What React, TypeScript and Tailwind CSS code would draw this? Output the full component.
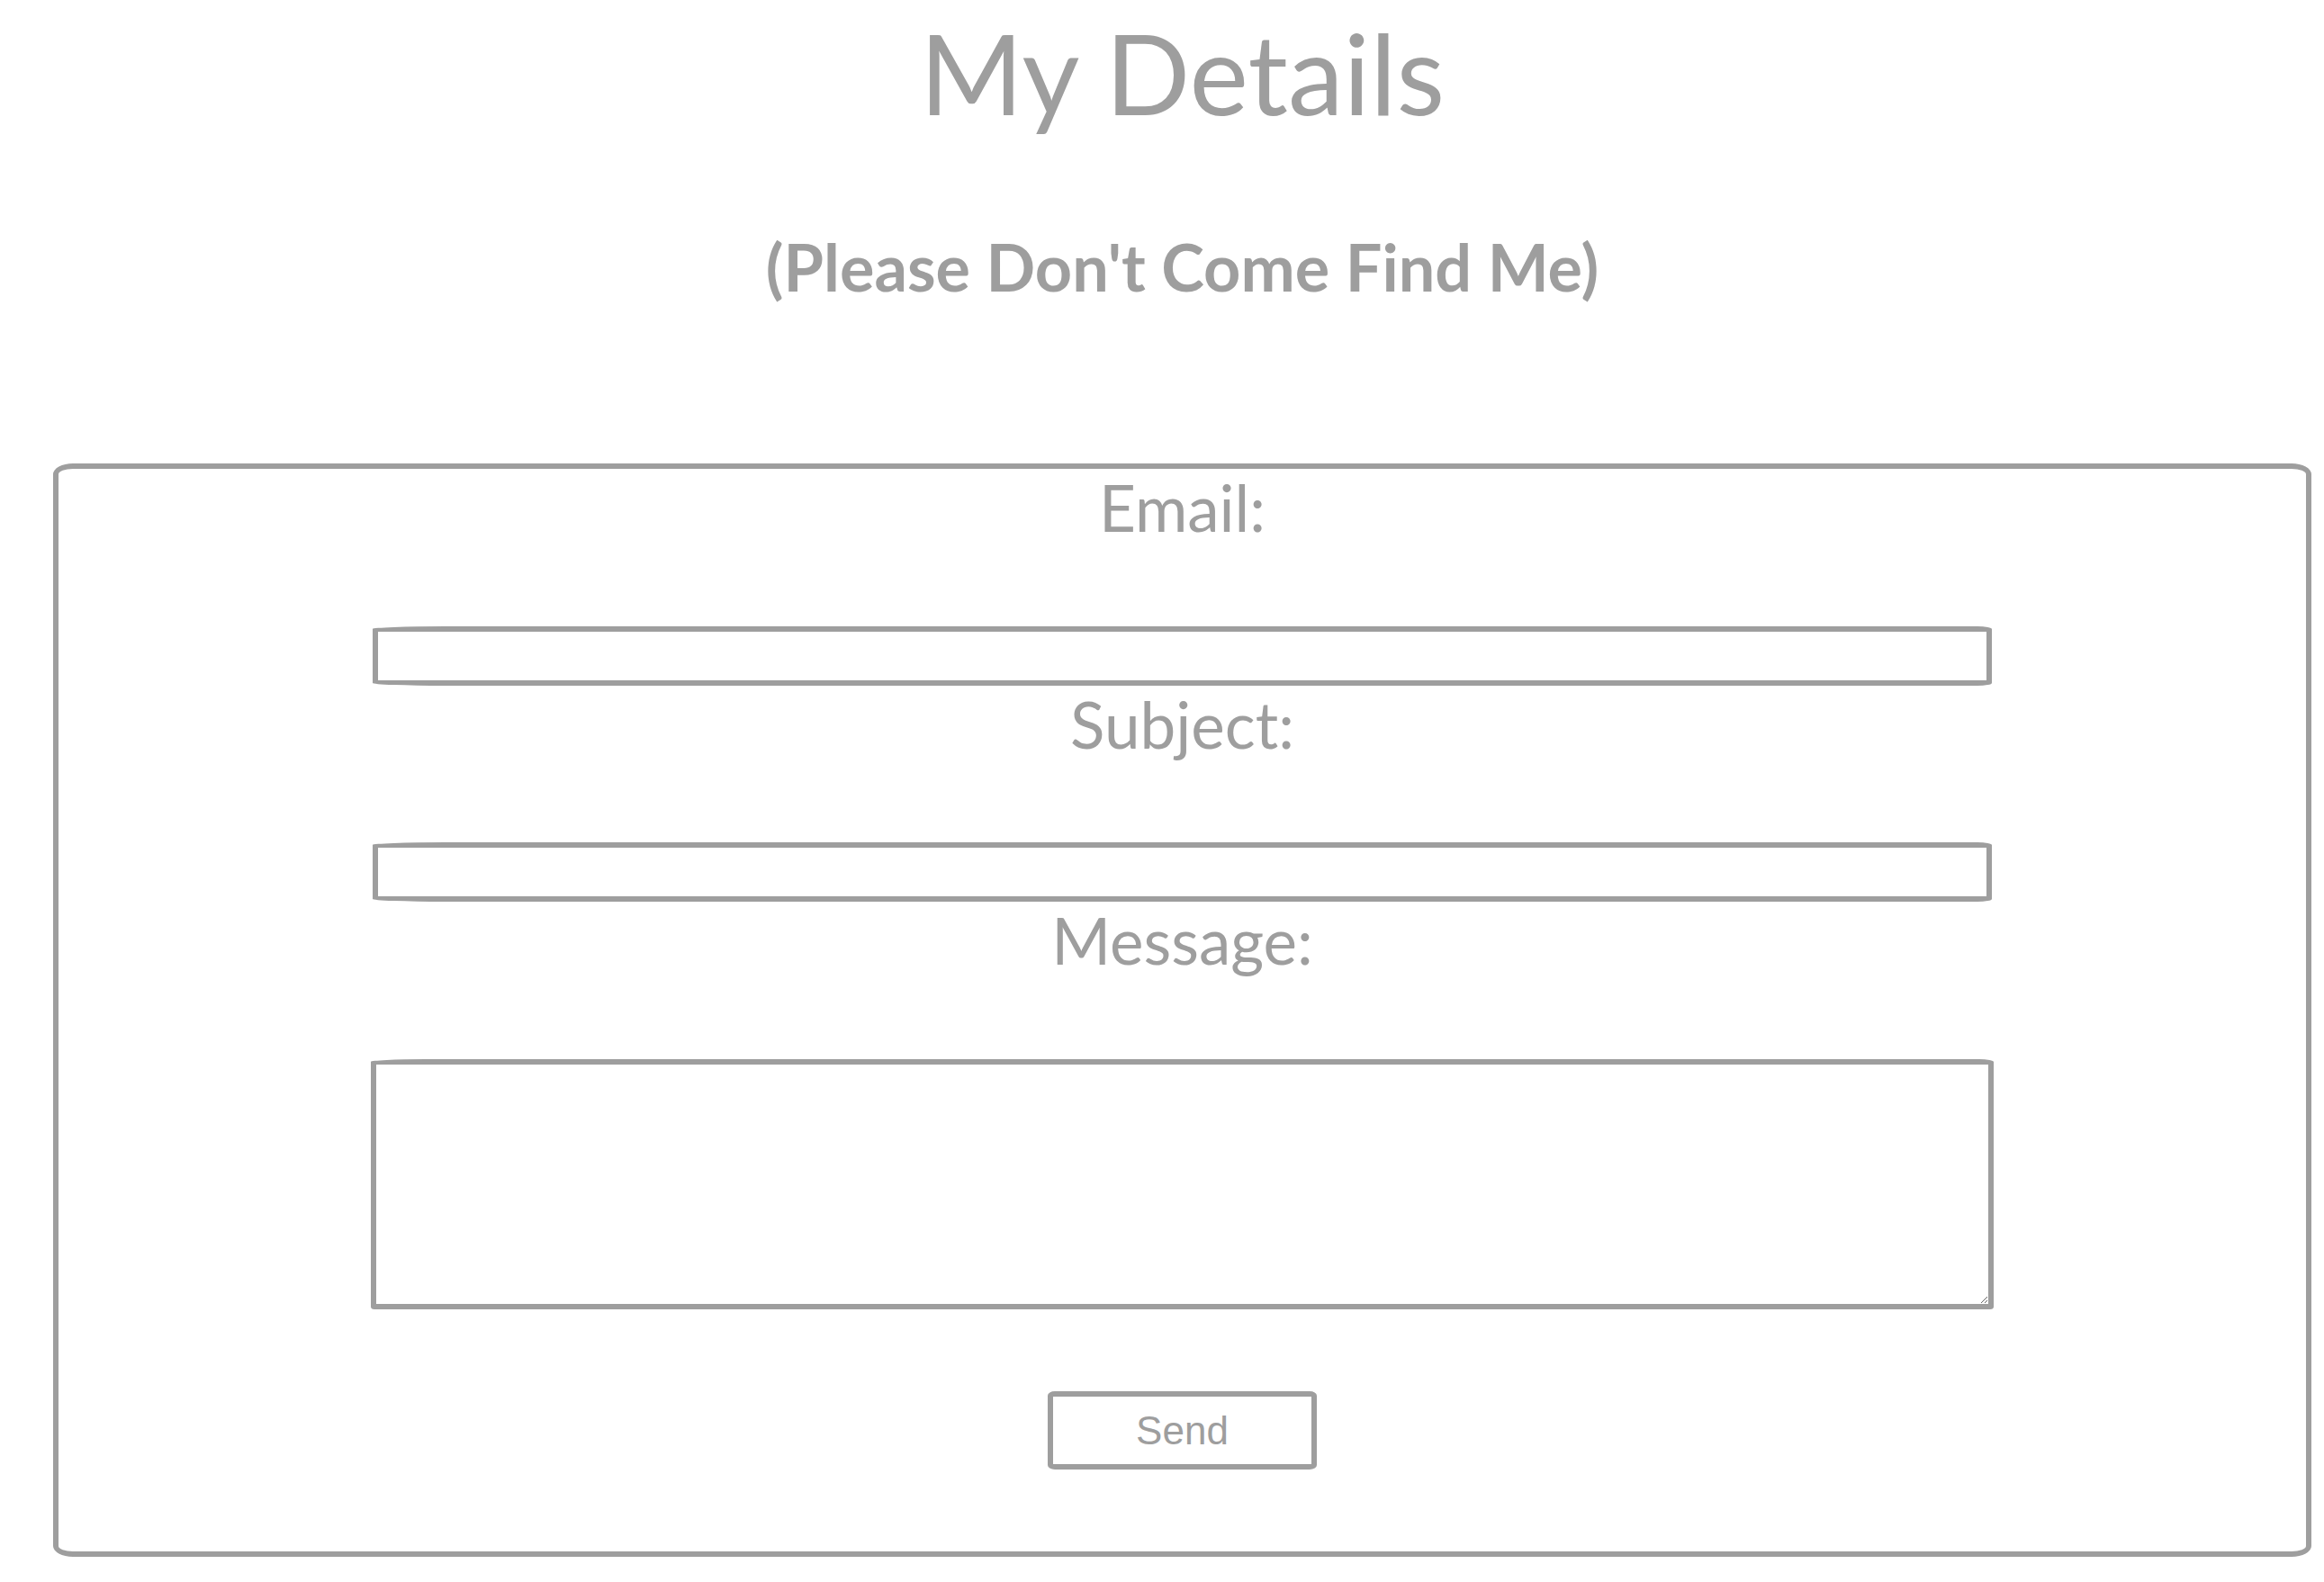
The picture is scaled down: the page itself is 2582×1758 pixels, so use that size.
import React from "react";

export default function App() {
  return (
    <div
      className="min-h-[1758px] w-full bg-white pl-[59px] pr-[14px] text-[#9e9e9e]"
      style={{ fontFamily: "Lato, 'Open Sans', sans-serif" }}
    >
      <h1 className="pt-[6px] text-center text-[124px] font-normal leading-[1.2]">
        My Details
      </h1>
      <h2 className="mt-[98px] text-center text-[72px] font-bold leading-[1.2]">
        (Please Don't Come Find Me)
      </h2>
      <form
        className="mt-[176px] flex w-full flex-col items-center rounded-[22px/12px] border-[6px] border-[#9e9e9e] pb-[91px]"
        onSubmit={(e) => e.preventDefault()}
      >
        <label className="block text-[71px] leading-[1.22]">Email:</label>
        <input
          type="text"
          className="mt-[88px] block h-[66px] w-[1799px] rounded-[80px_16px_16px_80px/3px_3px_3px_3px] border-[6px] border-[#9e9e9e] bg-white outline-none"
        />
        <label className="block text-[71px] leading-[1.22]">Subject:</label>
        <input
          type="text"
          className="mt-[88px] block h-[66px] w-[1799px] rounded-[80px_16px_16px_80px/3px_3px_3px_3px] border-[6px] border-[#9e9e9e] bg-white outline-none"
        />
        <label className="block text-[71px] leading-[1.22]">Message:</label>
        <textarea
          className="mt-[88px] block h-[278px] w-[1803px] rounded-[60px_16px_4px_4px/3px_3px_3px_3px] border-[6px] border-[#9e9e9e] bg-white outline-none"
        />
        <button
          type="submit"
          className="mt-[91px] h-[87px] w-[299px] rounded-[8px/5px] border-[6px] border-[#9e9e9e] bg-white text-[44px] text-[#9e9e9e]"
          style={{ fontFamily: "'Liberation Sans', Arial, sans-serif" }}
        >
          Send
        </button>
      </form>
    </div>
  );
}
